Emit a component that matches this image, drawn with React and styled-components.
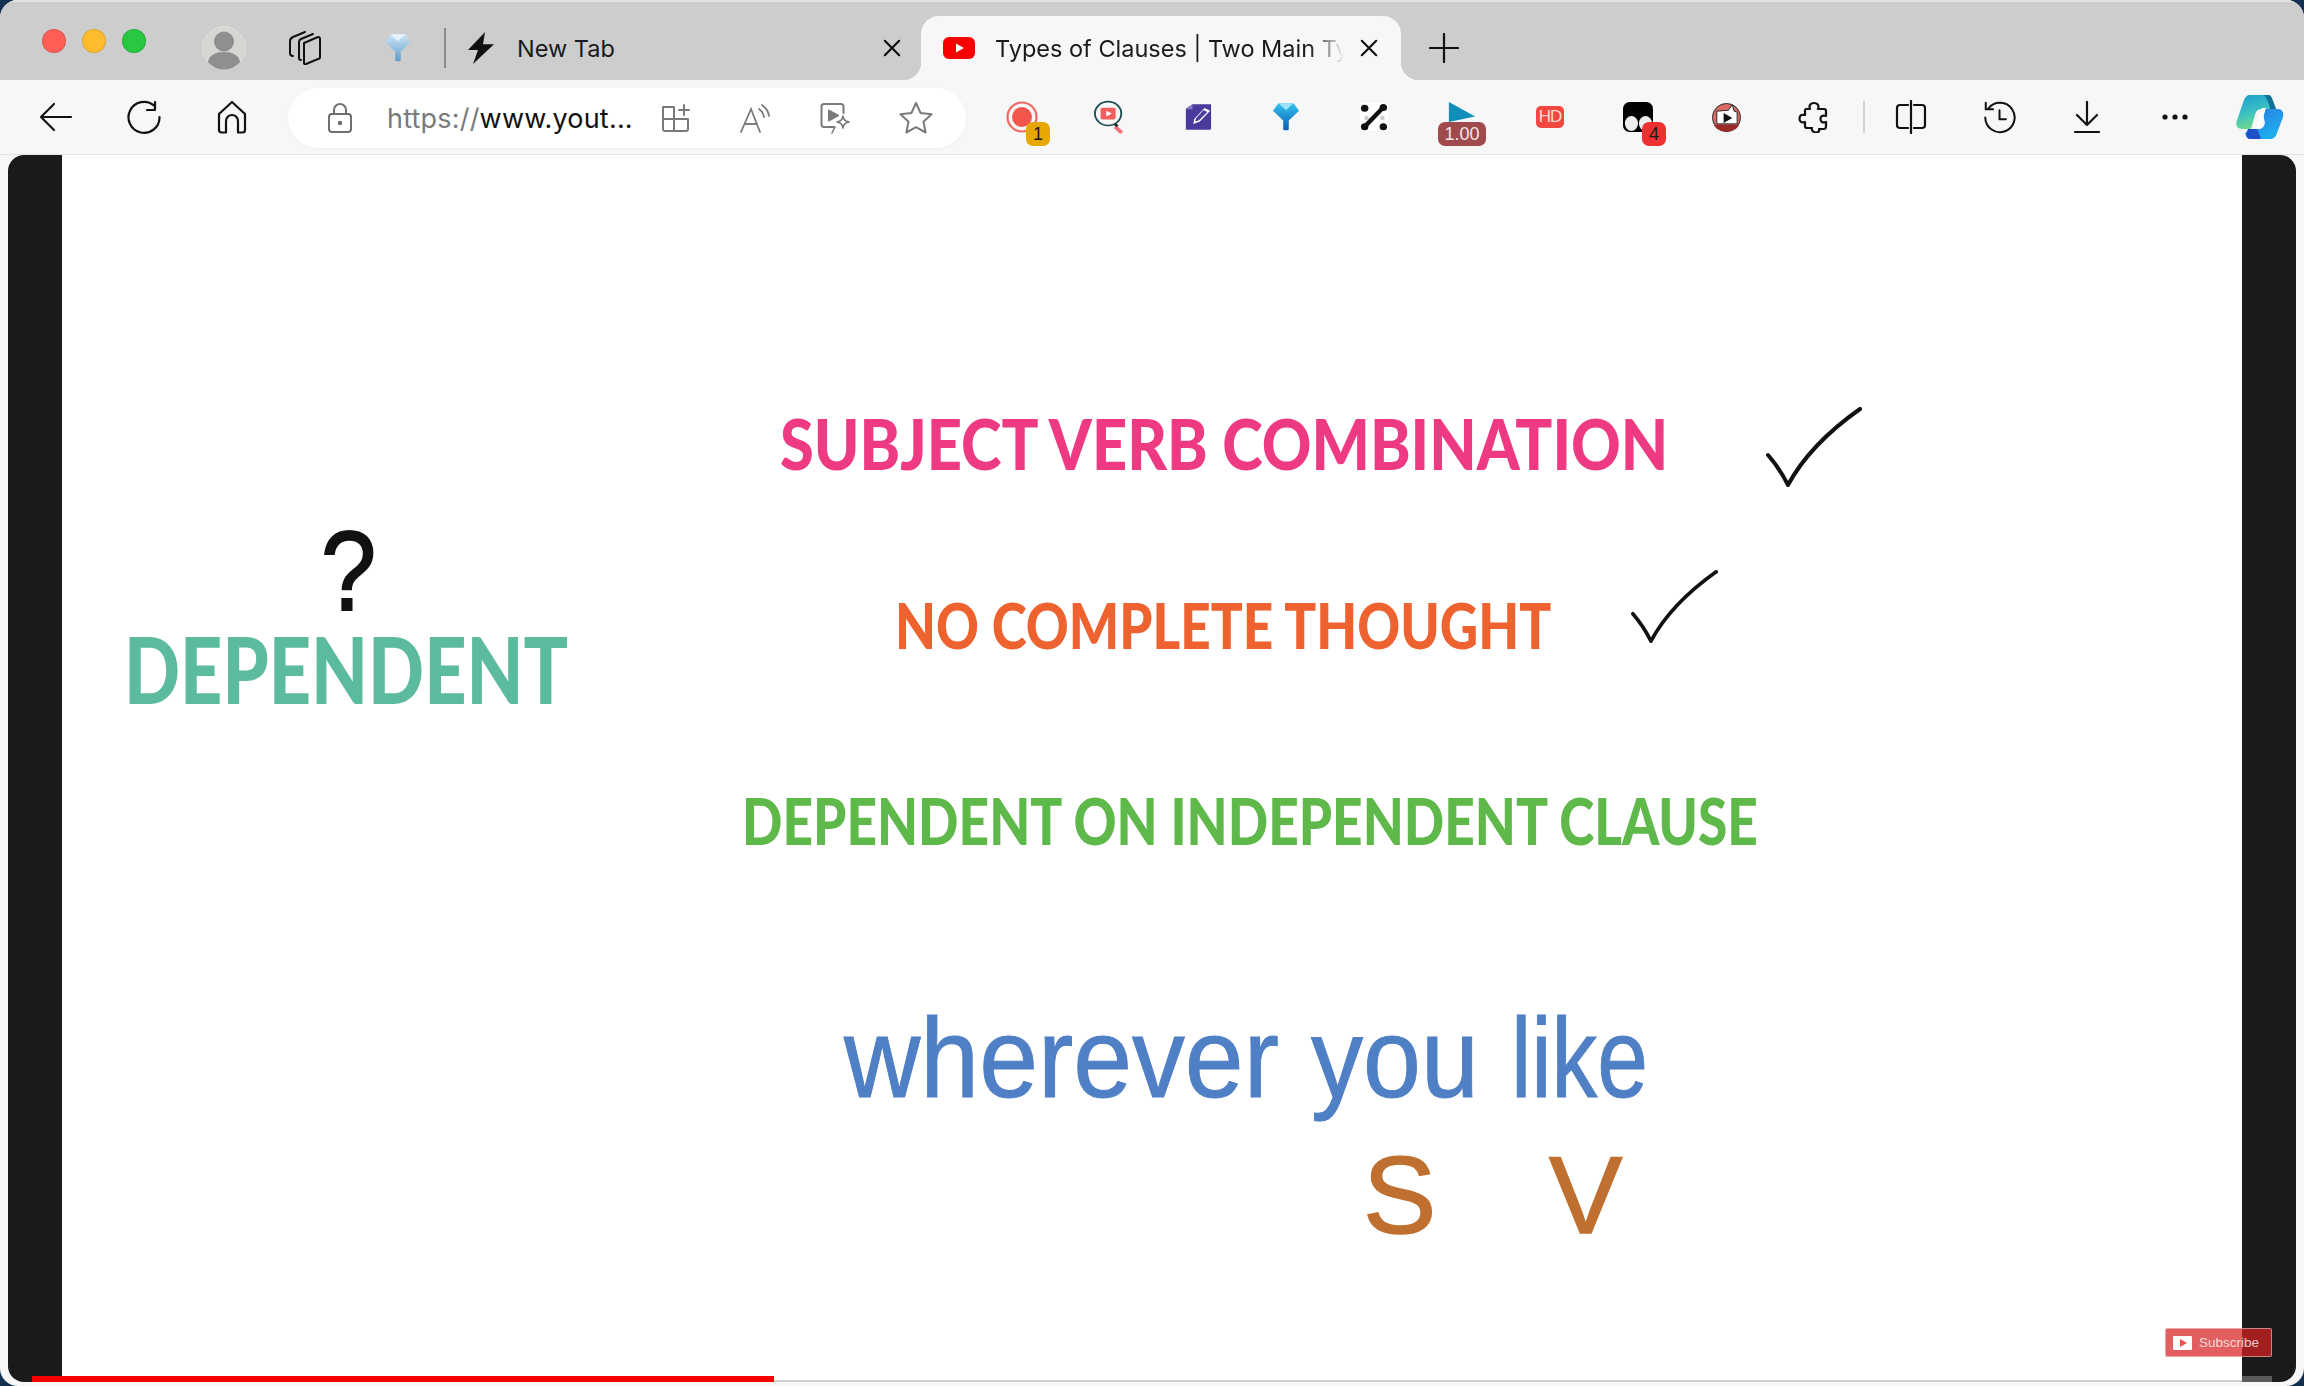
import React, { useLayoutEffect, useRef, useState } from 'react'
import styled, { createGlobalStyle } from 'styled-components'

const GlobalStyle = createGlobalStyle`
  html, body { margin: 0; padding: 0; background: #12304f; }
  body { font-family: "Inter", "Liberation Sans", sans-serif; overflow: hidden; }
  * { box-sizing: border-box; }
`

const Window = styled.div`
  width: 2304px;
  height: 1386px;
  display: flex;
  flex-direction: column;
  background: #f7f7f7;
  border-radius: 18px;
  overflow: hidden;
`

/* ---------- tab strip ---------- */
const TabStrip = styled.div`
  height: 80px;
  flex: none;
  display: flex;
  align-items: center;
  padding: 16px 0 0 42px;
  background: #cdcdcd;
  box-shadow: inset 0 2px 0 #e2e2e2;
`
const Lights = styled.div`
  display: flex;
  gap: 16px;
  margin-bottom: 14px;
`
const Light = styled.span`
  width: 24px;
  height: 24px;
  border-radius: 50%;
  background: ${(p) => p.$color};
  border: 1px solid rgba(0, 0, 0, 0.12);
`
const StripSlot = styled.div`
  flex: none;
  display: flex;
  margin-left: ${(p) => p.$gap}px;
`
const StripDivider = styled.span`
  width: 2px;
  height: 40px;
  margin-left: 32px;
  background: #8a8a8a;
`
const InactiveTab = styled.div`
  width: 475px;
  height: 64px;
  flex: none;
  display: flex;
  align-items: center;
  padding-left: 21px;
  gap: 22px;
`
const TabLabel = styled.span`
  flex: 1;
  font-size: 23.5px;
  color: #1a1a1a;
  white-space: nowrap;
  overflow: hidden;
`
const FadedLabel = styled(TabLabel)`
  -webkit-mask-image: linear-gradient(to right, #000 90%, rgba(0, 0, 0, 0.5) 95%, transparent 100%);
  mask-image: linear-gradient(to right, #000 90%, rgba(0, 0, 0, 0.5) 95%, transparent 100%);
`
const CloseSlot = styled.span`
  flex: none;
  width: 50px;
  margin-right: 4px;
  display: flex;
  justify-content: center;
`
const ActiveTab = styled.div`
  position: relative;
  width: 480px;
  height: 64px;
  flex: none;
  display: flex;
  align-items: center;
  padding: 0 3px 0 22px;
  gap: 20px;
  background: #f7f7f7;
  border-radius: 18px 18px 0 0;

  ${CloseSlot} {
    margin-left: -20px;
  }

  &::before,
  &::after {
    content: '';
    position: absolute;
    bottom: 0;
    width: 18px;
    height: 18px;
  }
  &::before {
    left: -18px;
    background: radial-gradient(circle at 0 0, transparent 18px, #f7f7f7 18.5px);
  }
  &::after {
    right: -18px;
    background: radial-gradient(circle at 100% 0, transparent 18px, #f7f7f7 18.5px);
  }
`
const NewTabButton = styled.div`
  margin-left: 28px;
  display: flex;
`

/* ---------- toolbar ---------- */
const Toolbar = styled.div`
  height: 75px;
  flex: none;
  display: flex;
  align-items: center;
  padding-left: 12px;
  background: #f7f7f7;
  border-bottom: 1px solid #e4e4e4;
`
const Slot = styled.div`
  position: relative;
  flex: none;
  width: ${(p) => p.$w || 88}px;
  height: 74px;
  display: flex;
  align-items: center;
  justify-content: center;
`
const AddressBar = styled.div`
  width: 678px;
  height: 60px;
  flex: none;
  margin: 2px 12px 0 12px;
  padding-left: 37px;
  display: flex;
  align-items: center;
  background: #fff;
  border-radius: 30px;
  box-shadow: 0 1px 3px rgba(0, 0, 0, 0.04);
`
const Url = styled.div`
  width: 249px;
  margin-left: 32px;
  flex: none;
  font-size: 27px;
  color: #111;
  white-space: nowrap;
  letter-spacing: 0.2px;
`
const UrlScheme = styled.span`
  color: #7a7a7a;
`
const AddressIcon = styled.div`
  width: 80px;
  flex: none;
  display: flex;
  justify-content: center;
`
const ToolDivider = styled.span`
  width: 2px;
  height: 32px;
  margin: 0 2px 0 5px;
  flex: none;
  background: #d4d4d4;
`
const Badge = styled.span`
  position: absolute;
  left: ${(p) => p.$left}px;
  top: 42px;
  min-width: ${(p) => p.$w || 24}px;
  height: 24px;
  display: flex;
  align-items: center;
  justify-content: center;
  border-radius: 7px;
  background: ${(p) => p.$bg};
  color: ${(p) => p.$fg || '#1a1a1a'};
  font-size: 18px;
  font-family: "Liberation Sans", sans-serif;
`
const HdChip = styled.span`
  width: 28px;
  height: 22px;
  display: flex;
  align-items: center;
  justify-content: center;
  border-radius: 5px;
  background: #f0483e;
  color: #ffd9d5;
  font-size: 17px;
  letter-spacing: -1px;
  font-family: "Liberation Sans", sans-serif;
`
const Raised = styled.div`
  display: flex;
  margin-bottom: 11px;
`

/* ---------- player ---------- */
const Player = styled.div`
  position: relative;
  height: 1227px;
  flex: none;
  margin: 0 8px;
  display: flex;
  background: #1a1a1a;
  border-radius: 16px;
  overflow: hidden;
`
const Pillar = styled.div`
  flex: none;
  width: ${(p) => p.$w}px;
`
const Slide = styled.div`
  flex: 1;
  display: grid;
  grid-template-columns: 670px 1fr;
  background: #fff;
  border-bottom: 2px solid #cfcfcf;
`
const LeftColumn = styled.div`
  padding: 364px 0 0 62px;
`
const Question = styled.div`
  width: 449px;
  text-align: center;
  font: 400 114px/104px "Liberation Sans", sans-serif;
  -webkit-text-stroke: 2px #111;
  color: #111;
  transform: scaleX(0.87);
`
const RightColumn = styled.div`
  display: flex;
  flex-direction: column;
`
const Line = styled.div`
  display: flex;
  align-items: center;
  height: ${(p) => p.$h}px;
  margin-top: ${(p) => p.$top}px;
  padding-left: ${(p) => p.$indent}px;
`
const Words = styled.div`
  display: flex;
  gap: 32px;
`
const FitBox = styled.div`
  flex: none;
  white-space: nowrap;
`
const Lettering = styled.span`
  display: inline-block;
  transform-origin: left center;
  color: ${(p) => p.$color};
  font-family: ${(p) => (p.$plain ? '"Liberation Sans"' : 'Lato, "Liberation Sans"')}, sans-serif;
  font-weight: ${(p) => (p.$plain ? 400 : 900)};
  font-size: ${(p) => p.$size}px;
  -webkit-text-stroke: ${(p) => (p.$plain ? `1px ${p.$color}` : '0')};
  line-height: 1;
`
const Tick = styled.svg`
  flex: none;
  margin-left: ${(p) => p.$gap}px;
  margin-top: ${(p) => p.$lift}px;
`
const Letter = styled.span`
  width: ${(p) => p.$w}px;
  flex: none;
  color: #bf7030;
  font: 400 110px/1 "Liberation Sans", sans-serif;
  -webkit-text-stroke: 1.5px #bf7030;
`
const ProgressBar = styled.div`
  position: absolute;
  left: 24px;
  bottom: 0;
  width: 742px;
  height: 6px;
  background: #f60000;
`
const TrackEnd = styled.div`
  position: absolute;
  left: 2234px;
  bottom: 0;
  width: 30px;
  height: 6px;
  background: #5a5a5a;
`
const Subscribe = styled.div`
  position: absolute;
  left: 2157px;
  bottom: 25px;
  width: 107px;
  height: 29px;
  display: flex;
  align-items: center;
  gap: 7px;
  padding-left: 7px;
  border: 1px solid rgba(255, 255, 255, 0.45);
  border-radius: 2px;
  background: rgba(216, 32, 32, 0.72);
  color: rgba(255, 255, 255, 0.78);
  font: 400 13.5px "Liberation Sans", sans-serif;
`
const SubscribeMark = styled.span`
  width: 19px;
  height: 14px;
  display: flex;
  align-items: center;
  justify-content: center;
  background: #fff;
  border-radius: 1px;
`

/* ---------- drawn icons ---------- */
const Line24 = ({ size = 36, color = '#111', width = 2.2, children, view = '0 0 36 36' }) => (
  <svg width={size} height={size} viewBox={view} fill="none" stroke={color} strokeWidth={width} strokeLinecap="round" strokeLinejoin="round">
    {children}
  </svg>
)

const Avatar = () => (
  <svg width="44" height="44" viewBox="0 0 44 44">
    <circle cx="22" cy="22" r="21.5" fill="#d6d6d3" stroke="#dedede" />
    <ellipse cx="22" cy="15.5" rx="10" ry="10" fill="#8f8f8f" />
    <path d="M6 36c1-7 8-10 16-10s15 3 16 10c-4 5-10 7.5-16 7.5S10 41 6 36z" fill="#8f8f8f" />
  </svg>
)
const Workspaces = () => (
  <Line24 size={34} view="0 0 34 34" width={2}>
    <path d="M17 12L31 6c1 0 2 1 2 2v18c0 1-1 2-2 2l-12 5c-1 .5-2 0-2-1z" />
    <path d="M26 3L14 8c-1 .5-2 1-2 3v16c0 1 1 2 2 2" />
    <path d="M18 1L6 6C4 7 3 8 3 10v12c0 2 1 3 3 3" />
  </Line24>
)
const Funnel = ({ light }) => (
  <svg width="28" height="30" viewBox="0 0 30 44" preserveAspectRatio="none">
    <defs>
      <linearGradient id={light ? 'fl' : 'fd'} x1="0" y1="0" x2="0" y2="1">
        <stop offset="0" stopColor={light ? '#cfe3f2' : '#35c0f0'} />
        <stop offset="1" stopColor={light ? '#5c9fd0' : '#0a5fb0'} />
      </linearGradient>
    </defs>
    <path d="M7 2h16l6 11-11 14v13c0 2-6 2-6 0V27L1 13z" fill={`url(#${light ? 'fl' : 'fd'})`} />
    <path d="M7 2h16l-8 10z" fill={light ? '#e8f2fa' : '#9be4fb'} />
  </svg>
)
const Bolt = () => (
  <svg width="28" height="32" viewBox="0 0 28 34" preserveAspectRatio="none">
    <path d="M18 0L1 19h10L6 34l21-21H16z" fill="#111" />
  </svg>
)
const Close = () => (
  <Line24 size={18} view="0 0 20 20" width={2.4}>
    <path d="M2 2l16 16M18 2L2 18" />
  </Line24>
)
const YouTubeMark = () => (
  <svg width="32" height="22" viewBox="0 0 32 22">
    <rect width="32" height="22" rx="6" fill="#f80000" />
    <path d="M13 6.500L21 11l-8 4.500z" fill="#fff" />
  </svg>
)
const Plus = () => (
  <Line24 size={30} view="0 0 30 30" width={2.2}>
    <path d="M15 1v28M1 15h28" />
  </Line24>
)
const Back = () => (
  <svg width="34" height="30" viewBox="0 0 34 30" fill="none" stroke="#111" strokeWidth="2.200" strokeLinecap="round" strokeLinejoin="round">
    <path d="M2 15h30M15 2L2 15l13 13" />
  </svg>
)
const Reload = () => (
  <Line24 size={36}>
    <path d="M28 6.500A15.500 15.500 0 1 0 33.500 18" />
    <path d="M29 3v8h-8" />
  </Line24>
)
const HomeIcon = () => (
  <Line24 size={34} view="0 0 34 34">
    <path d="M4 14L17 2l13 12v16c0 1.500-1 2.500-2.500 2.500H23V21a6 6 0 0 0-12 0v11.500H6.500C5 32.500 4 31.500 4 30z" />
  </Line24>
)
const LockIcon = () => (
  <Line24 size={30} color="#6f6f6f" view="0 0 30 30" width={2}>
    <rect x="4" y="11" width="22" height="18" rx="3" />
    <path d="M9 11V7a6 6 0 0 1 12 0v4" />
    <circle cx="15" cy="20" r="1.200" fill="#6f6f6f" />
  </Line24>
)
const AddTab = () => (
  <Line24 size={32} color="#7a7a7a" view="0 0 32 32" width={2}>
    <path d="M3 5h11v24H5c-1 0-2-1-2-2zM14 17H3M14 17h14v10c0 1-1 2-2 2H14" />
    <path d="M24 3v10M19 8h10" />
  </Line24>
)
const ReadAloud = () => (
  <svg width="34" height="32" viewBox="0 0 34 32" fill="none" stroke="#7a7a7a" strokeWidth="1.800" strokeLinecap="round">
    <path d="M2 30L12 7l9 23M6 22h12" />
    <path d="M20 7c3 2 4.500 4.500 5 8M23 3c4 3 6.500 6 7 11" />
  </svg>
)
const VideoSpark = () => (
  <svg width="34" height="34" viewBox="0 0 34 34" fill="none" stroke="#7a7a7a" strokeWidth="2" strokeLinecap="round" strokeLinejoin="round">
    <path d="M15 26H5c-1.500 0-2.500-1-2.500-2.500v-18C2.500 4 3.500 3 5 3h17c1.500 0 2.500 1 2.500 2.500V12" />
    <path d="M10 9.500l9 5-9 5z" fill="#7a7a7a" />
    <path d="M24 15c.8 4 2 5 6 6-4 1-5.200 2-6 6-.8-4-2-5-6-6 4-1 5.200-2 6-6zM16 26l-3 6" strokeWidth="1.600" />
  </svg>
)
const Star = () => (
  <Line24 size={34} color="#7a7a7a" view="0 0 34 34" width={2}>
    <path d="M17 2l4.600 10 10.900 1.300-8 7.400 2.100 10.800L17 26.200 7.400 31.500l2.100-10.800-8-7.400L12.400 12z" />
  </Line24>
)
const RecIcon = () => (
  <svg width="32" height="34" viewBox="0 0 32 34" fill="none">
    <circle cx="16" cy="17" r="14.500" stroke="#ef6a62" strokeWidth="2.200" />
    <circle cx="16" cy="17" r="10" fill="#f2564d" />
  </svg>
)
const SearchVideo = () => (
  <svg width="32" height="34" viewBox="0 0 34 40" preserveAspectRatio="none" fill="none">
    <circle cx="15" cy="16" r="14" stroke="#1f4f55" strokeWidth="2" />
    <rect x="7" y="9" width="16" height="14" rx="2" fill="#f4605f" />
    <path d="M13 12.500l6 3.500-6 3.500z" fill="#fff" />
    <path d="M24 30l7 7-3 3-7-7z" fill="#f0707c" />
    <path d="M22 28l3 3" stroke="#222" strokeWidth="3" />
  </svg>
)
const DocPen = () => (
  <svg width="28" height="28" viewBox="0 0 30 44" preserveAspectRatio="none">
    <path d="M9 2h20v38c0 1-1 2-2 2H2V9z" fill="#4b3a9c" />
    <path d="M2 10h7V2z" fill="#8a7cc8" />
    <path d="M22 8l6 4-11 17-7 4 1-8z" fill="#fff" />
    <path d="M21 11l4 3-9 13-4 2 1-5z" fill="#4b3a9c" />
  </svg>
)
const Nodes = () => (
  <svg width="28" height="28" viewBox="0 0 30 32" preserveAspectRatio="none">
    <rect width="30" height="32" fill="#fff" />
    <circle cx="5" cy="6" r="4" fill="#111" />
    <circle cx="25" cy="5" r="4" fill="#111" />
    <circle cx="5" cy="27" r="4" fill="#111" />
    <circle cx="25" cy="27" r="4" fill="#111" />
    <circle cx="24" cy="17" r="2.500" fill="#ccc" />
    <circle cx="7" cy="17" r="2.500" fill="#ccc" />
    <path d="M25 5L5 27" stroke="#111" strokeWidth="5" />
  </svg>
)
const SpeedTriangle = () => (
  <svg width="28" height="20" viewBox="0 0 32 22" preserveAspectRatio="none">
    <path d="M1 0l30 16L1 22z" fill="#128ebd" />
  </svg>
)
const Ghost = () => (
  <svg width="30" height="30" viewBox="0 0 32 32">
    <rect width="32" height="32" rx="7" fill="#000" />
    <ellipse cx="9" cy="23" rx="7" ry="8" fill="#eee" />
    <ellipse cx="24" cy="23" rx="7" ry="8" fill="#eee" />
  </svg>
)
const RedPlay = () => (
  <svg width="29" height="29" viewBox="0 0 30 32" preserveAspectRatio="none">
    <ellipse cx="15" cy="16" rx="14.500" ry="15.500" fill="#d96a66" stroke="#222" strokeWidth="1" />
    <path d="M2 24h26c-2 5-7 7.500-13 7.500S4 29 2 24z" fill="#9a2a2a" />
    <path d="M5 9l12-1 4-6 2 7 3 1v13H5z" fill="#fff" stroke="#222" strokeWidth="1" />
    <path d="M12 11l9 5.500-9 5.500z" fill="#111" />
  </svg>
)
const Puzzle = () => (
  <Line24 size={32} view="0 0 32 32" width={2.2}>
    <path d="M8 8h4c-1.500-4 1-6 4-6s5.500 2 4 6h6c1 0 2 1 2 2v5c-4-1.500-5.500 1-5.500 3s1.500 4.500 5.500 3v4c0 2-1 3-2 3h-5c1 2.500-1 3.500-3 3.500S13 29.500 14 27H9c-1 0-2-1-2-2v-4c-4 1.500-5.500-1-5.500-3.500S3 13 7 14v-4c0-1 0-2 1-2z" />
  </Line24>
)
const SplitView = () => (
  <svg width="32" height="34" viewBox="0 0 32 34" fill="none" stroke="#111" strokeWidth="2.200" strokeLinecap="round" strokeLinejoin="round">
    <path d="M13 5H5C3.500 5 2 6 2 8v17c0 2 1.500 3 3 3h8M19 5h8c1.500 0 3 1 3 3v17c0 2-1.500 3-3 3h-8M16 1v32" />
  </svg>
)
const History = () => (
  <Line24 size={33}>
    <path d="M6 8a16 16 0 1 1-3.500 10" />
    <path d="M3 2v7h8M18 10v10h7" />
  </Line24>
)
const Download = () => (
  <svg width="26" height="32" viewBox="0 0 26 32" fill="none" stroke="#111" strokeWidth="2.200" strokeLinecap="round" strokeLinejoin="round">
    <path d="M13 1v23M3 14l10 10 10-10M1 31h24" />
  </svg>
)
const More = () => (
  <svg width="26" height="6" viewBox="0 0 26 6">
    <circle cx="3" cy="3" r="2.600" fill="#111" />
    <circle cx="13" cy="3" r="2.600" fill="#111" />
    <circle cx="23" cy="3" r="2.600" fill="#111" />
  </svg>
)
const Copilot = () => (
  <svg width="48" height="44" viewBox="0 0 48 44">
    <defs>
      <linearGradient id="coA" x1="0" y1="0" x2="0.3" y2="1">
        <stop offset="0" stopColor="#1a9bd0" />
        <stop offset="0.6" stopColor="#3fc4c0" />
        <stop offset="1" stopColor="#70d88c" />
      </linearGradient>
      <linearGradient id="coB" x1="0.2" y1="0" x2="0.8" y2="1">
        <stop offset="0" stopColor="#2f7fe6" />
        <stop offset="1" stopColor="#18b4ec" />
      </linearGradient>
    </defs>
    <path d="M14 0h18c3 0 4 3 5 6l3 8H26c-4 0-6 2-7 6l-4 14H6C1 34-1 30 1 25L8 5c1-3 3-5 6-5z" fill="url(#coA)" />
    <path d="M26 14h16c4 0 6 3 5 8l-6 16c-1 4-4 6-7 6H14c-3 0-4-3-5-6l6-4h8c3 0 5-2 6-6z" fill="url(#coB)" />
    <path d="M30 13l-6 20h-4l6-20z" fill="#fff" />
    <path d="M28 0h4c3 0 4 3 5 6l3 8h-6c-1-6-3-11-6-14z" fill="#0f6e96" />
    <path d="M12 34h8c2 0 3 4 5 10H14c-3 0-5-4-2-10z" fill="#1c50c8" />
  </svg>
)
const CheckMark = ({ w, h, gap, lift }) => (
  <Tick $gap={gap} $lift={lift} width={w} height={h} viewBox="0 0 96 80" preserveAspectRatio="none" fill="none">
    <path d="M2 48c7 8 14 18 20 30C36 52 60 26 94 2" stroke="#111" strokeWidth="4" strokeLinecap="round" strokeLinejoin="round" />
  </Tick>
)

// squeezes the text sideways so it takes exactly the width the video lettering has
function FitText({ width, children, ...rest }) {
  const ref = useRef(null)
  const [scale, setScale] = useState(1)
  useLayoutEffect(() => {
    setScale(width / ref.current.offsetWidth)
  }, [width])
  return (
    <FitBox style={{ width }}>
      <Lettering ref={ref} style={{ transform: `scaleX(${scale})` }} {...rest}>
        {children}
      </Lettering>
    </FitBox>
  )
}

export default function App() {
  return (
    <Window>
      <GlobalStyle />
      <TabStrip>
        <Lights>
          <Light $color="#ff5f57" />
          <Light $color="#febc2e" />
          <Light $color="#28c840" />
        </Lights>
        <StripSlot $gap={56}><Avatar /></StripSlot>
        <StripSlot $gap={41}><Workspaces /></StripSlot>
        <StripSlot $gap={63}><Funnel light /></StripSlot>
        <StripDivider />
        <InactiveTab>
          <Bolt />
          <TabLabel>New Tab</TabLabel>
          <CloseSlot><Close /></CloseSlot>
        </InactiveTab>
        <ActiveTab>
          <YouTubeMark />
          <FadedLabel>Types of Clauses | Two Main Types</FadedLabel>
          <CloseSlot><Close /></CloseSlot>
        </ActiveTab>
        <NewTabButton><Plus /></NewTabButton>
      </TabStrip>

      <Toolbar>
        <Slot><Back /></Slot>
        <Slot><Reload /></Slot>
        <Slot><HomeIcon /></Slot>
        <AddressBar>
          <LockIcon />
          <Url><UrlScheme>https://</UrlScheme>www.yout...</Url>
          <AddressIcon><AddTab /></AddressIcon>
          <AddressIcon><ReadAloud /></AddressIcon>
          <AddressIcon><VideoSpark /></AddressIcon>
          <AddressIcon><Star /></AddressIcon>
        </AddressBar>
        <Slot><RecIcon /><Badge $left={48} $bg="#e6a800">1</Badge></Slot>
        <Slot><SearchVideo /></Slot>
        <Slot><DocPen /></Slot>
        <Slot><Funnel /></Slot>
        <Slot><Nodes /></Slot>
        <Slot>
          <Raised><SpeedTriangle /></Raised>
          <Badge $left={20} $w={48} $bg="#a04a4d" $fg="#f4e6e6">1.00</Badge>
        </Slot>
        <Slot><HdChip>HD</HdChip></Slot>
        <Slot><Ghost /><Badge $left={48} $bg="#ee3030">4</Badge></Slot>
        <Slot><RedPlay /></Slot>
        <Slot><Puzzle /></Slot>
        <ToolDivider />
        <Slot><SplitView /></Slot>
        <Slot><History /></Slot>
        <Slot><Download /></Slot>
        <Slot><More /></Slot>
        <Slot $w={82}><Copilot /></Slot>
      </Toolbar>

      <Player>
        <Pillar $w={54} />
        <Slide>
          <LeftColumn>
            <Question>?</Question>
            <FitText width={444} $color="#5cbb9e" $size={92}>DEPENDENT</FitText>
          </LeftColumn>
          <RightColumn>
            <Line $top={248} $h={80} $indent={48}>
              <FitText width={888} $color="#ee3a82" $size={70}>SUBJECT VERB COMBINATION</FitText>
              <CheckMark w={96} h={80} gap={98} lift={8} />
            </Line>
            <Line $top={104} $h={74} $indent={163}>
              <FitText width={656} $color="#ee6230" $size={63}>NO COMPLETE THOUGHT</FitText>
              <CheckMark w={87} h={73} gap={80} lift={-36} />
            </Line>
            <Line $top={130} $h={60} $indent={10}>
              <FitText width={1016} $color="#5fb84a" $size={64}>DEPENDENT ON INDEPENDENT CLAUSE</FitText>
            </Line>
            <Line $top={144} $h={126} $indent={112}>
              <Words>
                <FitText width={435} $color="#4f7fc4" $size={114} $plain>wherever</FitText>
                <FitText width={168} $color="#4f7fc4" $size={114} $plain>you</FitText>
                <FitText width={137} $color="#4f7fc4" $size={114} $plain>like</FitText>
              </Words>
            </Line>
            <Line $top={17} $h={114} $indent={631}>
              <Letter $w={186}>S</Letter>
              <Letter $w={80}>V</Letter>
            </Line>
          </RightColumn>
        </Slide>
        <Pillar $w={54} />
        <ProgressBar />
        <TrackEnd />
        <Subscribe>
          <SubscribeMark>
            <svg width="8" height="8" viewBox="0 0 8 8"><path d="M1 0l7 4-7 4z" fill="#e8534f" /></svg>
          </SubscribeMark>
          Subscribe
        </Subscribe>
      </Player>
    </Window>
  )
}
